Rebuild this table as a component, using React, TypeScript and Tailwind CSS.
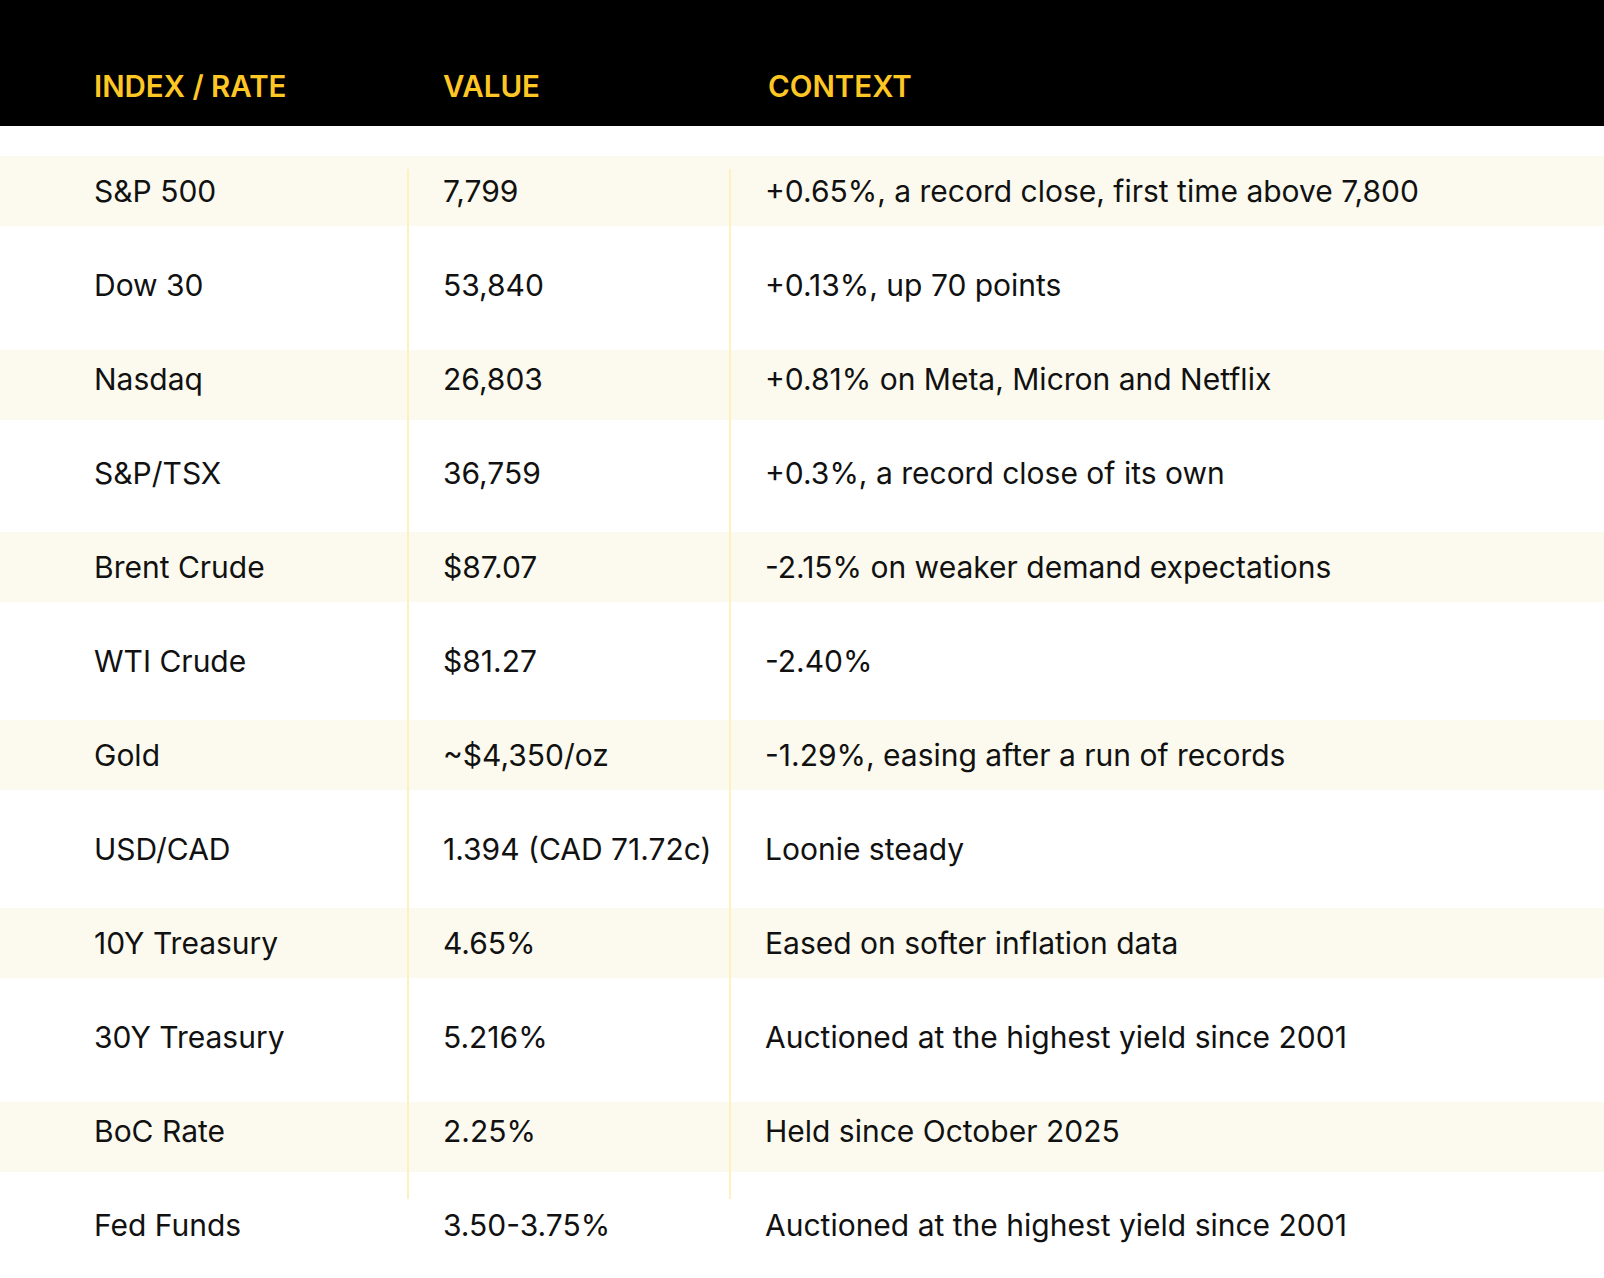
import React from "react";

type Row = { name: string; value: string; context: string };

const rows: Row[] = [
  { name: "S&P 500", value: "7,799", context: "+0.65%, a record close, first time above 7,800" },
  { name: "Dow 30", value: "53,840", context: "+0.13%, up 70 points" },
  { name: "Nasdaq", value: "26,803", context: "+0.81% on Meta, Micron and Netflix" },
  { name: "S&P/TSX", value: "36,759", context: "+0.3%, a record close of its own" },
  { name: "Brent Crude", value: "$87.07", context: "-2.15% on weaker demand expectations" },
  { name: "WTI Crude", value: "$81.27", context: "-2.40%" },
  { name: "Gold", value: "~$4,350/oz", context: "-1.29%, easing after a run of records" },
  { name: "USD/CAD", value: "1.394 (CAD 71.72c)", context: "Loonie steady" },
  { name: "10Y Treasury", value: "4.65%", context: "Eased on softer inflation data" },
  { name: "30Y Treasury", value: "5.216%", context: "Auctioned at the highest yield since 2001" },
  { name: "BoC Rate", value: "2.25%", context: "Held since October 2025" },
  { name: "Fed Funds", value: "3.50-3.75%", context: "Auctioned at the highest yield since 2001" },
];

// the Nasdaq and BoC bands sit a few pixels lower than the rest
const shifted = new Set([2, 10]);

export default function App() {
  return (
    <div
      className="w-[1604px] h-[1278px] bg-white text-[#111111] overflow-hidden"
      style={{ fontFamily: "Inter, 'Liberation Sans', sans-serif" }}
    >
      {/* header */}
      <div className="h-[126px] bg-black flex items-end pb-[18px] text-[29.5px] font-semibold uppercase text-[#ffc724]">
        <div className="w-[408px] pl-[94px]">Index / Rate</div>
        <div className="w-[322px] pl-[35px]">Value</div>
        <div className="flex-1 pl-[38px]">Context</div>
      </div>

      {/* body */}
      <div className="relative pt-[18px]">
        <div className="absolute left-[407px] top-[43px] h-[1030px] w-[2px] bg-[#fdf2bf]" />
        <div className="absolute left-[729px] top-[43px] h-[1030px] w-[2px] bg-[#fdf2bf]" />
        {rows.map((r, i) => (
          <div key={r.name} className="h-[94px] flex items-center">
            <div
              className={
                "h-[70px] w-full flex items-center text-[30px] " +
                (i % 2 === 0 ? "bg-[#fcfaee] " : "bg-white ") +
                (shifted.has(i) ? "mt-[12px] pb-[12px]" : "")
              }
            >
              <div className="w-[408px] pl-[94px] whitespace-nowrap">{r.name}</div>
              <div className="w-[322px] pl-[35px] whitespace-nowrap">{r.value}</div>
              <div className="flex-1 pl-[35px] whitespace-nowrap">{r.context}</div>
            </div>
          </div>
        ))}
      </div>
    </div>
  );
}
